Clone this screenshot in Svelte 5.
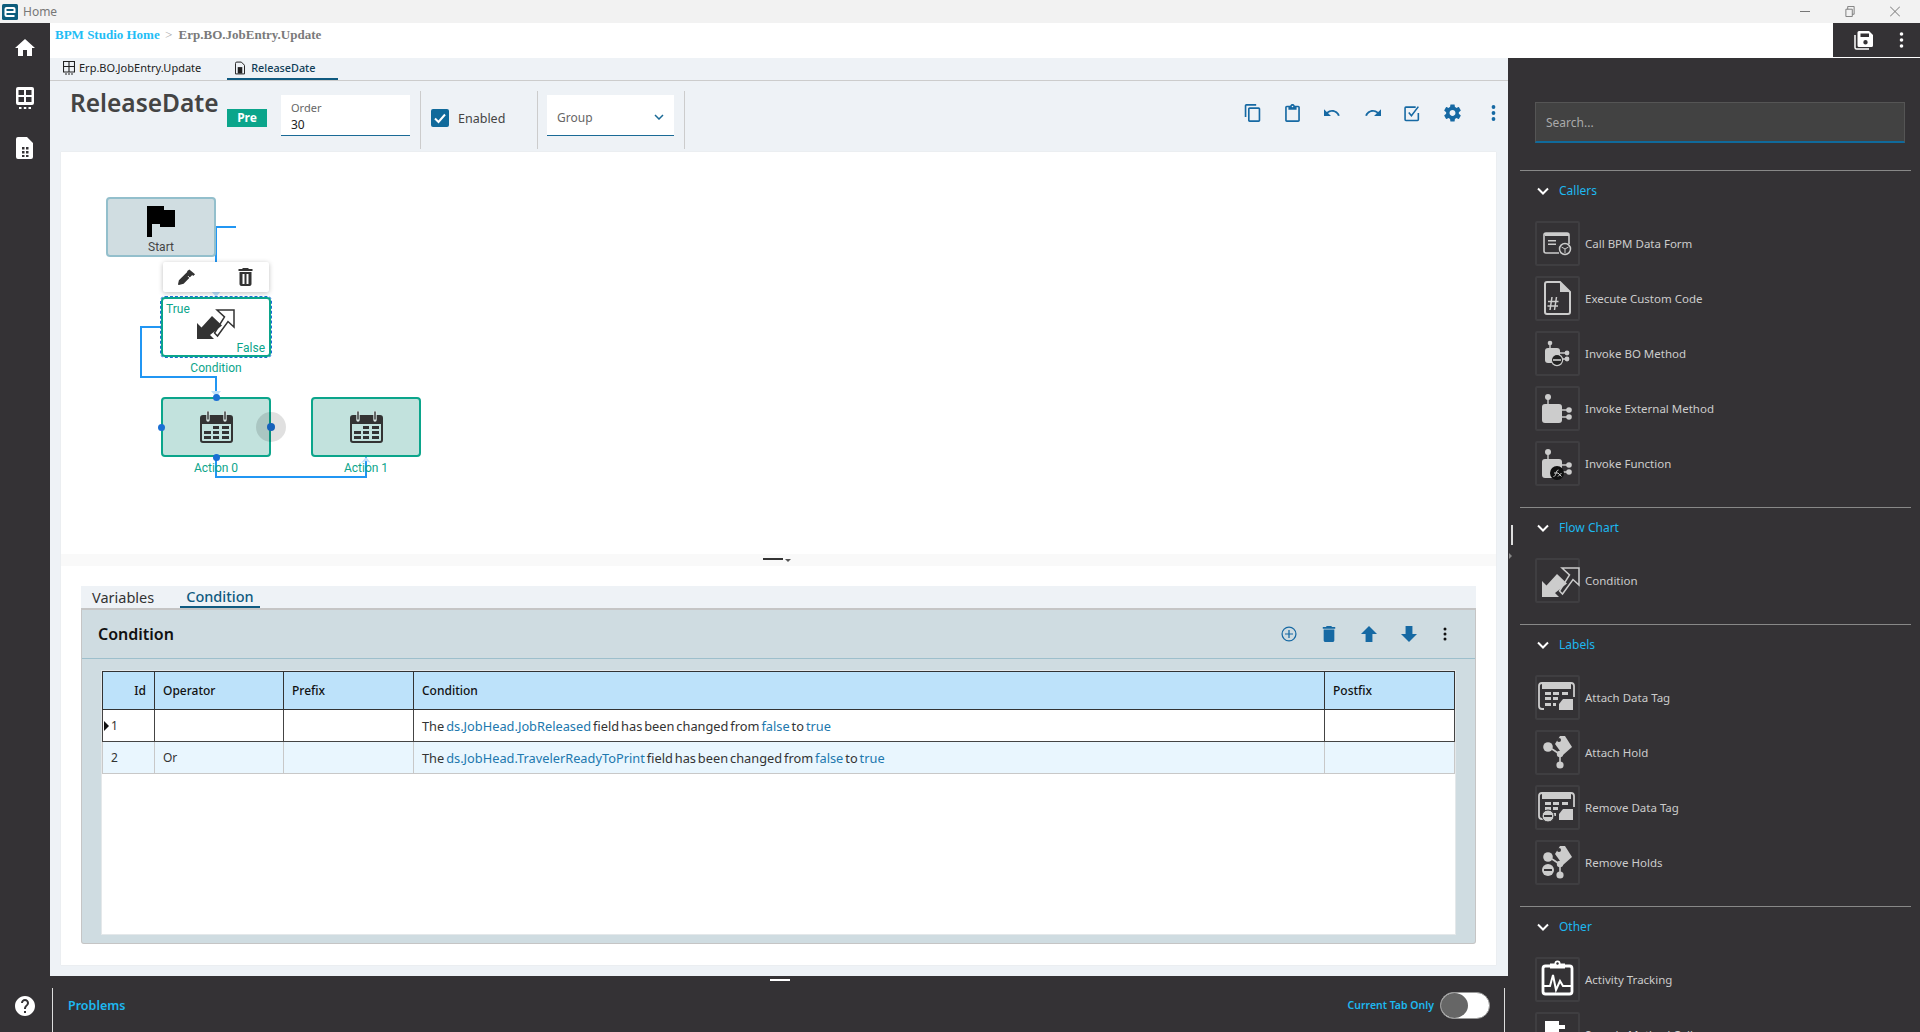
<script>
    const columns = [
        { label: "Id", width: 52, right: true },
        { label: "Operator", width: 129 },
        { label: "Prefix", width: 130 },
        { label: "Condition", width: 911 },
        { label: "Postfix", width: 130 },
    ];

    const rows = [
        { id: 1, op: "", field: "ds.JobHead.JobReleased" },
        { id: 2, op: "Or", field: "ds.JobHead.TravelerReadyToPrint" },
    ];

    const sections = [
        {
            title: "Callers",
            items: [
                { label: "Call BPM Data Form", icon: "form" },
                { label: "Execute Custom Code", icon: "code" },
                { label: "Invoke BO Method", icon: "bo" },
                { label: "Invoke External Method", icon: "ext" },
                { label: "Invoke Function", icon: "fn" },
            ],
        },
        { title: "Flow Chart", items: [{ label: "Condition", icon: "cond" }] },
        {
            title: "Labels",
            items: [
                { label: "Attach Data Tag", icon: "tag" },
                { label: "Attach Hold", icon: "hold" },
                { label: "Remove Data Tag", icon: "untag" },
                { label: "Remove Holds", icon: "unhold" },
            ],
        },
        {
            title: "Other",
            items: [
                { label: "Activity Tracking", icon: "track" },
                { label: "Sample Method Call", icon: "compat" },
            ],
        },
    ];
</script>

{#snippet condIcon(fill)}
    <path d="M0 14 4.500 18.500 15 7 25 16.500 13 26 17 30H0Z" fill={fill} stroke="none" />
    <path d="M20 1H37V18L31 12.500 20.500 27 17.500 24 27.500 8Z" fill="none" stroke={fill} stroke-width="1.500" stroke-linejoin="miter" />
{/snippet}

{#snippet calendar()}
    <svg class="cal" viewBox="0 0 33 32">
        <path d="M3 4H30a3 3 0 0 1 3 3V29a3 3 0 0 1-3 3H3a3 3 0 0 1-3-3V7a3 3 0 0 1 3-3ZM2 13V29a1 1 0 0 0 1 1H30a1 1 0 0 0 1-1V13Z" fill="#333" fill-rule="evenodd" />
        <path d="M8 1V9M25 1V9" stroke="#dbe9e6" stroke-width="3.400" stroke-linecap="round" />
        <path d="M8 1V8M25 1V8" stroke="#333" stroke-width="1.400" stroke-linecap="round" />
        <path d="M13 15h6v3h-6zM22 15h7v3h-7zM4 20h7v3H4zM13 20h6v3h-6zM22 20h7v3h-7zM4 25h7v3H4zM13 25h6v3h-6zM22 25h7v3h-7z" fill="#333" />
    </svg>
{/snippet}

{#snippet robot()}
    <rect x="7" y="18" width="20" height="19" rx="3" fill="#ccc" />
    <circle cx="13" cy="11" r="3" fill="#ccc" />
    <path d="M13 13V18M27 24H33M27 31H33" stroke="#ccc" stroke-width="1.400" />
    <circle cx="34" cy="24" r="2.800" fill="#ccc" />
    <circle cx="34" cy="31" r="2.800" fill="#ccc" />
{/snippet}

{#snippet dataTag()}
    <path d="M9 34H7a3 3 0 0 1-3-3V11a3 3 0 0 1 3-3H36a3 3 0 0 1 3 3V22" fill="none" stroke="#ccc" stroke-width="1.800" />
    <path d="M7 9H36V14H7Z" fill="#ccc" />
    <path d="M10 17h6v3h-6zM18 17h6v3h-6zM27 17h6v3h-6zM10 22h6v3h-6zM18 22h5v3h-5zM10 28h6v3h-6zM18 28h3v3h-3z" fill="#ccc" />
    <path d="M28 24H38V35H24V29Z" fill="#ccc" />
{/snippet}

{#snippet holdTag()}
    <circle cx="13" cy="17" r="4.800" fill="#ccc" />
    <circle cx="25" cy="24" r="3.200" fill="#ccc" />
    <circle cx="25" cy="35" r="3.600" fill="#ccc" />
    <path d="M17 19 23 23M25 27V32" stroke="#ccc" stroke-width="1.600" />
    <path d="M20 14 25 6H30L37 17 28 25Z" fill="#ccc" />
    <circle cx="24" cy="10" r="2" fill="#343235" />
{/snippet}

{#snippet paletteIcon(name)}
    <svg class="pal" viewBox="0 0 45 45">
        {#if name === "form"}
            <path d="M24 32H11a2 2 0 0 1-2-2V14a2 2 0 0 1 2-2H32a2 2 0 0 1 2 2V23" fill="none" stroke="#ccc" stroke-width="1.600" />
            <path d="M10 12H34V15H10ZM13 19H21V20.500H13ZM13 22.500H21V24H13Z" fill="#ccc" />
            <circle cx="30" cy="28" r="5.500" fill="#343235" stroke="#ccc" stroke-width="1.500" />
            <path d="M30 28V32M30 28 26.500 26M30 28 33.500 26" stroke="#ccc" stroke-width="1" />
        {:else if name === "code"}
            <path d="M12 6H25L35 16V36a2 2 0 0 1-2 2H12a2 2 0 0 1-2-2V8a2 2 0 0 1 2-2Z" fill="none" stroke="#ccc" stroke-width="2" />
            <path d="M25 6V16H35Z" fill="#ccc" />
            <path d="M17 21 15 34M21.500 21 19.500 34M13 25.500H23.500M12.500 30H23" stroke="#ccc" stroke-width="1.500" fill="none" />
        {:else if name === "bo"}
            <rect x="10" y="17" width="15" height="15" rx="3" fill="#ccc" />
            <circle cx="15" cy="12" r="2.300" fill="#ccc" />
            <path d="M15 14V17M25 22H31M25 28H31" stroke="#ccc" stroke-width="1.400" />
            <circle cx="32" cy="22" r="2.400" fill="#ccc" />
            <circle cx="32" cy="28" r="2.400" fill="#ccc" />
            <circle cx="22" cy="29" r="5.600" fill="#222" stroke="#ccc" stroke-width="1.200" />
            <path d="M18 29H26" stroke="#ccc" stroke-width="1.600" />
        {:else if name === "ext"}
            {@render robot()}
        {:else if name === "fn"}
            {@render robot()}
            <circle cx="22" cy="32" r="7" fill="#111" />
            <path d="M18.500 35.500C21.500 35.500 20.500 29 23.500 29M19 32H23M23 32 26.500 35.500M26.500 32 23 35.500" stroke="#ccc" stroke-width="1" fill="none" />
        {:else if name === "cond"}
            <g transform="translate(7 9)">{@render condIcon("#ccc")}</g>
        {:else if name === "tag"}
            {@render dataTag()}
        {:else if name === "hold"}
            {@render holdTag()}
        {:else if name === "untag"}
            {@render dataTag()}
            <circle cx="13" cy="31" r="6" fill="#ccc" stroke="#343235" stroke-width="1" />
            <path d="M9 31H17" stroke="#343235" stroke-width="2" />
        {:else if name === "unhold"}
            {@render holdTag()}
            <circle cx="13" cy="30" r="6" fill="#ccc" />
            <path d="M9 30H17" stroke="#343235" stroke-width="2" />
        {:else if name === "track"}
            <rect x="8" y="9" width="29" height="28" rx="2.500" fill="none" stroke="#fff" stroke-width="2.800" />
            <path d="M15 6.500H30V11.500H15Z" fill="#fff" />
            <circle cx="22.500" cy="6.500" r="3" fill="#fff" />
            <circle cx="22.500" cy="6.500" r="1.200" fill="#343235" />
            <path d="M9 29H15L18 18 21 33 25 24 28 29H36" fill="none" stroke="#fff" stroke-width="2" />
        {:else}
            <path d="M10 9H24V13H30V17L24 17V38H10Z" fill="#fff" />
        {/if}
    </svg>
{/snippet}

<div class="app">
    <header class="titlebar">
        <svg class="logo" viewBox="0 0 16 16">
            <rect width="16" height="16" rx="1.500" fill="#0c5c7c" />
            <path d="M3.500 8H12.500V5a1 1 0 0 0-1-1H4.500a1 1 0 0 0-1 1V11a1 1 0 0 0 1 1H12.500" fill="none" stroke="#fff" stroke-width="2" />
        </svg>
        <span class="home">Home</span>
        <div class="winctl">
            <svg viewBox="0 0 10 10"><path d="M0 5H10" /></svg>
            <svg viewBox="0 0 10 12"><path d="M.5 3.500H7.500V11.500H.5ZM2.500 3.500V.5H9.500V9H7.500" /></svg>
            <svg viewBox="0 0 10 10"><path d="M0 0 10 10M10 0 0 10" /></svg>
        </div>
    </header>

    <div class="body">
        <nav class="rail">
            <div class="rail-top">
                <svg class="rail-icon" viewBox="0 0 24 24"><path d="M10 20v-6h4v6h5v-8h3L12 3 2 12h3v8z" /></svg>
                <svg class="rail-icon" viewBox="0 0 20 24">
                    <path d="M3 1H17a2 2 0 0 1 2 2V17a2 2 0 0 1-2 2H3a2 2 0 0 1-2-2V3a2 2 0 0 1 2-2ZM3.500 4V9H9V4ZM11 4V9H16.500V4ZM3.500 11V16H9V11ZM11 11V16H16.500V11Z" fill-rule="evenodd" />
                    <path d="M4 21h2.500v2H4zM8.800 21h2.500v2H8.800zM13.500 21h2.500v2H13.500z" />
                </svg>
                <svg class="rail-icon" viewBox="0 0 20 24">
                    <path d="M3 1H12L18 7V21a2 2 0 0 1-2 2H3a2 2 0 0 1-2-2V3a2 2 0 0 1 2-2ZM7 11V13.500H9.500V11ZM11 11V13.500H13.500V11ZM7 15V17.500H9.500V15ZM11 15V17.500H13.500V15ZM7 19V21H9.500V19ZM11 19V21H13.500V19Z" fill-rule="evenodd" />
                </svg>
            </div>
            <svg class="help" viewBox="2 2 20 20">
                <path d="M12 2C6.480 2 2 6.480 2 12s4.480 10 10 10 10-4.480 10-10S17.520 2 12 2zm1 17h-2v-2h2v2zm2.070-7.750l-.9.920C13.450 12.900 13 13.500 13 15h-2v-.5c0-1.100.45-2.100 1.170-2.830l1.240-1.260c.37-.36.59-.86.59-1.410 0-1.100-.9-2-2-2s-2 .9-2 2H8c0-2.210 1.790-4 4-4s4 1.790 4 4c0 .88-.36 1.680-.93 2.250z" />
            </svg>
        </nav>

        <div class="work">
            <div class="crumbs">
                <div class="crumb-text">
                    <span class="crumb-link">BPM Studio Home</span>
                    <span class="crumb-sep">&gt;</span>
                    <span class="crumb-cur">Erp.BO.JobEntry.Update</span>
                </div>
                <div class="save-box">
                    <svg class="save" viewBox="0 0 20 20">
                        <path d="M1 5V17.500A1.500 1.500 0 0 0 2.500 19H15" fill="none" stroke="#fff" stroke-width="1.500" />
                        <path d="M5 1H15L19 5V15.500A1.500 1.500 0 0 1 17.500 17H5A1.500 1.500 0 0 1 3.500 15.500V2.500A1.500 1.500 0 0 1 5 1ZM6.500 3.500V7H15V3.500ZM11.500 10A2.200 2.200 0 1 0 11.500 14.400 2.200 2.200 0 0 0 11.500 10Z" fill="#fff" fill-rule="evenodd" />
                    </svg>
                    <svg class="dots" viewBox="0 0 4 16"><circle cx="2" cy="2" r="1.800" /><circle cx="2" cy="8" r="1.800" /><circle cx="2" cy="14" r="1.800" /></svg>
                </div>
            </div>

            <div class="lower">
                <main class="center">
                    <div class="tabs">
                        <div class="tab">
                            <svg class="tab-icon" viewBox="0 0 12 14">
                                <path d="M.5.5H11.500V11H.5ZM6 .5V11M.5 5.500H11.500" fill="none" stroke="#222" stroke-width="1.100" />
                                <path d="M2 12.500h2v1H2zM5 12.500h2v1H5zM8 12.500h2v1H8z" fill="#222" />
                            </svg>
                            Erp.BO.JobEntry.Update
                        </div>
                        <div class="tab active">
                            <svg class="tab-icon" viewBox="0 0 11 14">
                                <path d="M.5 2A1.500 1.500 0 0 1 2 .5H7L10.500 4V13.500H.5Z" fill="none" stroke="#222" stroke-width="1.100" />
                                <path d="M3 6H8V13H3Z" fill="#222" />
                            </svg>
                            ReleaseDate
                        </div>
                    </div>

                    <div class="head">
                        <h1>ReleaseDate</h1>
                        <span class="badge">Pre</span>
                        <div class="field order">
                            <span class="field-label">Order</span>
                            <span class="field-value">30</span>
                        </div>
                        <div class="sep"></div>
                        <label class="enabled">
                            <span class="check">
                                <svg viewBox="0 0 18 18"><path d="M4 9.500 7.500 13 14 5.500" fill="none" stroke="#fff" stroke-width="2" /></svg>
                            </span>
                            Enabled
                        </label>
                        <div class="sep"></div>
                        <div class="field group">
                            <span>Group</span>
                            <svg class="chev" viewBox="0 0 10 6"><path d="M1 1 5 5 9 1" fill="none" stroke="#1a6a96" stroke-width="1.500" /></svg>
                        </div>
                        <div class="sep"></div>
                        <div class="tools">
                            <svg viewBox="2 1 19 22"><path d="M16 1H4c-1.100 0-2 .9-2 2v14h2V3h12V1zm3 4H8c-1.100 0-2 .9-2 2v14c0 1.100.9 2 2 2h11c1.100 0 2-.9 2-2V7c0-1.100-.9-2-2-2zm0 16H8V7h11v14z" /></svg>
                            <svg viewBox="3 0 18 22"><path d="M19 2h-4.180C14.400.84 13.300 0 12 0c-1.300 0-2.400.84-2.820 2H5c-1.100 0-2 .9-2 2v16c0 1.100.9 2 2 2h14c1.100 0 2-.9 2-2V4c0-1.100-.9-2-2-2zm-7 0c.55 0 1 .45 1 1s-.45 1-1 1-1-.45-1-1 .45-1 1-1zm7 18H5V4h2v3h10V4h2v16z" /></svg>
                            <svg viewBox="2 5 22 14"><path d="M12.500 8c-2.650 0-5.050.99-6.900 2.600L2 7v9h9l-3.620-3.620c1.390-1.160 3.160-1.880 5.120-1.880 3.540 0 6.550 2.310 7.600 5.500l2.370-.78C21.080 11.030 17.150 8 12.500 8z" /></svg>
                            <svg viewBox="0 5 22 14"><path d="M18.400 10.600C16.550 8.990 14.150 8 11.500 8c-4.650 0-8.580 3.030-9.960 7.220L3.900 16c1.050-3.190 4.050-5.500 7.600-5.500 1.950 0 3.730.72 5.120 1.880L13 16h9V7l-3.600 3.600z" /></svg>
                            <svg viewBox="0 0 16 16"><path d="M13.500 8V14.200a.8.800 0 0 1-.8.800H1.800a.8.800 0 0 1-.8-.8V3.300a.8.800 0 0 1 .8-.8H11M4.500 7.500 7 10.500 13.500 2" fill="none" stroke="#1669a3" stroke-width="1.500" /></svg>
                            <svg viewBox="2 2 20 20"><path d="M19.430 12.980c.04-.32.07-.64.07-.98s-.03-.66-.07-.98l2.110-1.650c.19-.15.24-.42.12-.64l-2-3.460c-.12-.22-.39-.3-.61-.22l-2.490 1c-.52-.4-1.080-.73-1.690-.98l-.38-2.650C14.460 2.180 14.250 2 14 2h-4c-.25 0-.46.18-.49.42l-.38 2.650c-.61.25-1.170.59-1.690.98l-2.490-1c-.23-.09-.49 0-.61.22l-2 3.460c-.13.22-.07.49.12.64l2.110 1.650c-.04.32-.07.65-.07.98s.03.66.07.98l-2.110 1.650c-.19.15-.24.42-.12.64l2 3.460c.12.22.39.3.61.22l2.490-1c.52.4 1.080.73 1.690.98l.38 2.650c.03.24.24.42.49.42h4c.25 0 .46-.18.49-.42l.38-2.650c.61-.25 1.170-.59 1.690-.98l2.490 1c.23.09.49 0 .61-.22l2-3.460c.12-.22.07-.49-.12-.64l-2.110-1.650zM12 15.500c-1.930 0-3.500-1.570-3.500-3.500s1.570-3.500 3.500-3.500 3.500 1.570 3.500 3.500-1.570 3.500-3.500 3.500z" /></svg>
                            <svg class="tool-dots" viewBox="0 0 4 16"><circle cx="2" cy="2" r="1.900" /><circle cx="2" cy="8" r="1.900" /><circle cx="2" cy="14" r="1.900" /></svg>
                        </div>
                    </div>

                    <section class="card">
                        <div class="canvas">
                            <svg class="wires" width="500" height="402">
                                <path d="M216 75H236M216 75V110M161 175H141V225H216V245M216 305V325H366V305" fill="none" stroke="#2196f3" stroke-width="2" />
                                <path d="M211 239H221L216 245ZM211 139H221L216 145ZM361 311 366 305 371 311 366 309Z" fill="#bfe0fb" />
                            </svg>

                            <div class="node start">
                                <svg class="flag" viewBox="0 0 28 31"><path d="M0 0H17V4H28V21H13V18H5V31H0Z" /></svg>
                                <span>Start</span>
                            </div>

                            <div class="popup">
                                <svg viewBox="0 0 20 18">
                                    <path d="M13 1 19 6 17 8 16 7 7 16 2 17.500 1 17 2 12.500 11 3.500 10.500 3Z" fill="#333" />
                                    <path d="M11.500 8 14 10.500" stroke="#fff" stroke-width="1" />
                                </svg>
                                <svg viewBox="5 3 14 18"><path d="M6 19c0 1.100.9 2 2 2h8c1.100 0 2-.9 2-2V7H6v12zM19 4h-3.500l-1-1h-5l-1 1H5v2h14V4z M9 9V19H11V9ZM13 9V19H15V9Z" fill="#333" fill-rule="evenodd" /></svg>
                            </div>

                            <div class="node cond">
                                <span class="true">True</span>
                                <svg class="cond-icon" viewBox="0 0 38 30">{@render condIcon("#333")}</svg>
                                <span class="false">False</span>
                            </div>
                            <span class="node-label cond-label">Condition</span>

                            <div class="node action a0">{@render calendar()}</div>
                            <span class="node-label a0-label">Action 0</span>
                            <div class="node action a1">{@render calendar()}</div>
                            <span class="node-label a1-label">Action 1</span>

                            <i class="port p-top"></i>
                            <i class="port p-left"></i>
                            <i class="port p-bottom"></i>
                            <i class="port p-right"></i>
                        </div>

                        <div class="splitter">
                            <i class="grip"></i><i class="grip-arrow"></i>
                        </div>

                        <div class="detail">
                            <div class="detail-tabs">
                                <div class="dtab">Variables</div>
                                <div class="dtab active">Condition</div>
                            </div>
                            <div class="panel">
                                <div class="panel-head">
                                    <h2>Condition</h2>
                                    <div class="panel-tools">
                                        <svg viewBox="0 0 18 18"><circle cx="9" cy="9" r="7.800" fill="none" stroke="#1669a3" stroke-width="1.400" /><path d="M9 4.500V13.500M4.500 9H13.500" stroke="#1669a3" stroke-width="1.400" /></svg>
                                        <svg viewBox="5 3 14 18"><path d="M6 19c0 1.100.9 2 2 2h8c1.100 0 2-.9 2-2V7H6v12zM19 4h-3.500l-1-1h-5l-1 1H5v2h14V4z" /></svg>
                                        <svg viewBox="0 0 14 14"><path d="M7 0 14 7H10V14H4V7H0Z" /></svg>
                                        <svg viewBox="0 0 14 14"><path d="M4 0H10V7H14L7 14 0 7H4Z" /></svg>
                                        <svg class="pdots" viewBox="0 0 4 14"><circle cx="2" cy="2" r="1.500" /><circle cx="2" cy="7" r="1.500" /><circle cx="2" cy="12" r="1.500" /></svg>
                                    </div>
                                </div>
                                <div class="grid">
                                    <table>
                                        <colgroup>
                                            {#each columns as col}<col style="width: {col.width}px" />{/each}
                                        </colgroup>
                                        <thead>
                                            <tr>
                                                {#each columns as col}
                                                    <th class:right={col.right}>{col.label}</th>
                                                {/each}
                                            </tr>
                                        </thead>
                                        <tbody>
                                            {#each rows as row, i}
                                                <tr class:selected={i === 0} class:alt={i === 1}>
                                                    <td class="id">{#if i === 0}<i class="marker"></i>{/if}{row.id}</td>
                                                    <td>{row.op}</td>
                                                    <td></td>
                                                    <td class="expr">The <span class="lnk">{row.field}</span> field has been changed from <span class="lnk">false</span> to <span class="lnk">true</span></td>
                                                    <td></td>
                                                </tr>
                                            {/each}
                                        </tbody>
                                    </table>
                                </div>
                            </div>
                        </div>
                    </section>

                    <footer class="foot">
                        <i class="foot-line left"></i>
                        <i class="foot-grip"></i>
                        <span class="problems">Problems</span>
                        <div class="foot-right">
                            <span class="current">Current Tab Only</span>
                            <div class="toggle"><i></i></div>
                        </div>
                        <i class="foot-line right"></i>
                    </footer>
                </main>

                <aside class="palette">
                    <i class="pal-bar"></i>
                    <i class="pal-arrow"></i>
                    <div class="search"><span>Search...</span></div>
                    {#each sections as section}
                        <section class="pal-section">
                            <div class="pal-title">
                                <svg viewBox="0 0 12 8"><path d="M1 1.500 6 6.500 11 1.500" fill="none" stroke="#fff" stroke-width="2" /></svg>
                                <span>{section.title}</span>
                            </div>
                            <div class="pal-items">
                                {#each section.items as item}
                                    <div class="pal-item">
                                        <div class="pal-box">{@render paletteIcon(item.icon)}</div>
                                        <span>{item.label}</span>
                                    </div>
                                {/each}
                            </div>
                        </section>
                    {/each}
                </aside>
            </div>
        </div>
    </div>
</div>

<style>
    :global(body) {
        margin: 0;
        background: #fff;
    }

    .app {
        width: 1920px;
        height: 1032px;
        overflow: hidden;
        display: flex;
        flex-direction: column;
        font-family: "Noto Sans", sans-serif;
        font-size: 12px;
        color: #333;
    }

    .titlebar {
        height: 23px;
        flex: none;
        background: #f2f2f2;
        display: flex;
        align-items: center;
        padding-left: 2px;
    }

    .logo {
        width: 16px;
        height: 16px;
    }

    .home {
        margin-left: 5px;
        color: #777;
        font-size: 12px;
    }

    .winctl {
        margin-left: auto;
        display: flex;
        gap: 35px;
        padding-right: 20px;
        align-items: center;
    }

    .winctl svg {
        width: 10px;
        height: 11px;
        fill: none;
        stroke: #777;
        stroke-width: 1;
    }

    .body {
        flex: 1;
        display: flex;
        min-height: 0;
    }

    .rail {
        width: 50px;
        flex: none;
        background: #343235;
        display: flex;
        flex-direction: column;
        justify-content: space-between;
        align-items: center;
        padding: 13px 0 16px;
        box-sizing: border-box;
    }

    .rail-top {
        display: flex;
        flex-direction: column;
        align-items: center;
        gap: 26px;
    }

    .rail-icon {
        width: 24px;
        height: 24px;
        fill: #fff;
    }

    .help {
        width: 20px;
        height: 20px;
        fill: #fff;
    }

    .work {
        flex: 1;
        min-width: 0;
        display: flex;
        flex-direction: column;
    }

    .crumbs {
        height: 35px;
        flex: none;
        display: flex;
        justify-content: space-between;
        background: #fff;
    }

    .crumb-text {
        padding: 4px 0 0 5px;
        font-family: "Liberation Serif", serif;
        font-weight: bold;
        font-size: 13px;
    }

    .crumb-link {
        color: #1fbdf5;
    }

    .crumb-sep {
        color: #aaa;
        font-weight: normal;
        margin: 0 3px 0 2px;
    }

    .crumb-cur {
        color: #7a7a7a;
    }

    .save-box {
        width: 87px;
        height: 34px;
        background: #343235;
        display: flex;
        align-items: center;
        gap: 25px;
        padding-left: 21px;
        box-sizing: border-box;
    }

    .save {
        width: 20px;
        height: 20px;
    }

    .dots {
        width: 5px;
        height: 16px;
        fill: #fff;
    }

    .lower {
        flex: 1;
        display: flex;
        min-height: 0;
    }

    .center {
        flex: 1;
        min-width: 0;
        background: #eef2f6;
        display: flex;
        flex-direction: column;
    }

    .tabs {
        height: 23px;
        flex: none;
        box-sizing: border-box;
        border-bottom: 1px solid #ccc;
        display: flex;
        padding-left: 13px;
        font-size: 11px;
        color: #222;
    }

    .tab {
        display: flex;
        align-items: center;
        gap: 4px;
        height: 22px;
        box-sizing: border-box;
        padding-bottom: 3px;
    }

    .tab.active {
        margin-left: 26px;
        width: 111px;
        padding: 0 0 1px 8px;
        border-bottom: 2px solid #0f5a80;
        color: #0f3d56;
        gap: 6px;
        font-size: 10.800px;
        font-weight: 500;
    }

    .tab-icon {
        width: 12px;
        height: 14px;
    }

    .tab.active .tab-icon {
        width: 10px;
    }

    .head {
        height: 71px;
        flex: none;
        display: flex;
        align-items: flex-start;
        padding-left: 20px;
        padding-right: 12px;
        position: relative;
    }

    h1 {
        margin: 4px 0 0;
        width: 148px;
        flex: none;
        font-size: 24.500px;
        font-weight: 600;
        line-height: 36px;
        color: #444;
        white-space: nowrap;
    }

    .badge {
        margin: 28px 0 0 9px;
        width: 40px;
        height: 18px;
        background: #0ba58b;
        color: #fff;
        font-weight: bold;
        font-size: 12px;
        line-height: 18px;
        text-align: center;
    }

    .field {
        margin-top: 14px;
        height: 41px;
        background: #fff;
        border-bottom: 1px solid #1a6a96;
        box-sizing: border-box;
    }

    .order {
        margin-left: 14px;
        width: 129px;
        padding: 5px 10px;
        display: flex;
        flex-direction: column;
    }

    .field-label {
        font-size: 11px;
        line-height: 16px;
        color: #666;
    }

    .field-value {
        font-size: 12px;
        line-height: 17px;
        color: #222;
    }

    .sep {
        width: 1px;
        height: 58px;
        margin-top: 10px;
        background: #ccc;
    }

    .order + .sep {
        margin-left: 10px;
    }

    .enabled {
        display: flex;
        align-items: center;
        gap: 9px;
        width: 74px;
        white-space: nowrap;
        margin: 26px 32px 0 10px;
        color: #444;
        font-size: 12.500px;
        height: 22px;
    }

    .check {
        width: 18px;
        height: 18px;
        flex: none;
        border-radius: 2px;
        background: #106a9b;
        display: block;
    }

    .check svg {
        display: block;
    }

    .group {
        width: 127px;
        margin-left: 9px;
        margin-right: 10px;
        display: flex;
        justify-content: space-between;
        align-items: center;
        padding: 4px 10px 0;
        color: #666;
    }

    .chev {
        width: 10px;
        height: 6px;
    }

    .tools {
        margin-left: auto;
        margin-top: 22px;
        display: flex;
        align-items: center;
        gap: 23px;
        height: 20px;
        fill: #1669a3;
    }

    .tools svg {
        width: 17px;
        height: 18px;
    }

    .tools svg.tool-dots {
        width: 5px;
        height: 16px;
        margin-left: 7px;
    }

    .card {
        flex: 1;
        min-height: 0;
        margin: 0 12px 11px 11px;
        background: #fff;
        display: flex;
        flex-direction: column;
        box-shadow: 0 0 1px #ddd;
    }

    .canvas {
        height: 402px;
        flex: none;
        position: relative;
    }

    .wires {
        position: absolute;
        left: -61px;
        top: 0;
    }

    .node {
        position: absolute;
        box-sizing: border-box;
        width: 110px;
        height: 60px;
        border-radius: 4px;
        border: 2px solid #0ba58b;
    }

    .start {
        left: 45px;
        top: 45px;
        background: #d0dde1;
        border-color: #93bfcc;
        display: flex;
        flex-direction: column;
        align-items: center;
        font-family: Roboto, sans-serif;
        font-size: 12px;
        color: #444;
    }

    .flag {
        width: 28px;
        height: 31px;
        margin-top: 7px;
        flex: none;
    }

    .start span {
        line-height: 14px;
        margin-top: 3px;
    }

    .popup {
        position: absolute;
        left: 102px;
        top: 110px;
        width: 106px;
        height: 30px;
        background: #fff;
        border-radius: 2px;
        box-shadow: 0 1px 5px rgba(0, 0, 0, 0.25);
        display: flex;
        align-items: center;
        gap: 40px;
        padding-left: 14px;
        box-sizing: border-box;
    }

    .popup svg {
        width: 19px;
        height: 18px;
    }

    .cond {
        left: 100px;
        top: 145px;
        background: #fff;
        outline: 1px dashed #1a6fd4;
        font-family: Roboto, sans-serif;
        font-size: 12px;
        color: #0ba58b;
    }

    .cond-icon {
        position: absolute;
        left: 34px;
        top: 10px;
        width: 38px;
        height: 30px;
    }

    .true {
        position: absolute;
        left: 3px;
        top: 3px;
    }

    .false {
        position: absolute;
        right: 4px;
        bottom: 0;
    }

    .node-label {
        position: absolute;
        width: 110px;
        text-align: center;
        font-family: Roboto, sans-serif;
        font-size: 12px;
        line-height: 14px;
        color: #0ba58b;
    }

    .cond-label {
        left: 100px;
        top: 209px;
    }

    .action {
        top: 245px;
        background: #c2e2dd;
        display: flex;
        align-items: center;
        justify-content: center;
    }

    .a0 {
        left: 100px;
    }

    .a1 {
        left: 250px;
    }

    .a0-label {
        left: 100px;
        top: 309px;
    }

    .a1-label {
        left: 250px;
        top: 309px;
    }

    .cal {
        width: 33px;
        height: 32px;
    }

    .port {
        position: absolute;
        width: 7px;
        height: 7px;
        border-radius: 50%;
        background: #1a6fd4;
    }

    .p-top {
        left: 151.500px;
        top: 241.500px;
    }

    .p-left {
        left: 96.500px;
        top: 271.500px;
    }

    .p-bottom {
        left: 151.500px;
        top: 301.500px;
    }

    .p-right {
        left: 206px;
        top: 271px;
        width: 8px;
        height: 8px;
    }

    .p-right::before {
        content: "";
        position: absolute;
        left: -11px;
        top: -11px;
        width: 30px;
        height: 30px;
        border-radius: 50%;
        background: rgba(0, 0, 0, 0.12);
    }

    .splitter {
        height: 12px;
        flex: none;
        background: #f9f9f9;
        position: relative;
    }

    .grip {
        position: absolute;
        left: 702px;
        top: 4px;
        width: 20px;
        height: 2px;
        background: #333;
    }

    .grip-arrow {
        position: absolute;
        left: 724px;
        top: 5px;
        border: 3px solid transparent;
        border-top-color: #555;
        border-bottom: 0;
    }

    .detail {
        flex: 1;
        min-height: 0;
        margin: 20px 20px 21px;
        display: flex;
        flex-direction: column;
    }

    .detail-tabs {
        height: 22px;
        flex: none;
        background: #eef2f6;
        display: flex;
        font-size: 14.500px;
        line-height: 22px;
        color: #333;
    }

    .dtab {
        padding: 0 6px;
        margin-left: 5px;
        height: 22px;
        box-sizing: border-box;
    }

    .dtab.active {
        margin-left: 20px;
        border-bottom: 2px solid #0f5a80;
        color: #0f5a80;
        font-weight: 500;
        line-height: 20px;
    }

    .panel {
        flex: 1;
        min-height: 0;
        background: #cfdce1;
        border: 1px solid #c5c5c5;
        border-top-width: 2px;
        border-radius: 0 0 3px 3px;
        display: flex;
        flex-direction: column;
    }

    .panel-head {
        height: 48px;
        flex: none;
        border-bottom: 1px solid #9dbfcc;
        display: flex;
        align-items: center;
        justify-content: space-between;
        padding: 0 28px 0 16px;
    }

    h2 {
        margin: 0;
        font-size: 16px;
        font-weight: 600;
        color: #111;
    }

    .panel-tools {
        display: flex;
        align-items: center;
        gap: 24px;
        fill: #1669a3;
    }

    .panel-tools svg {
        width: 16px;
        height: 16px;
    }

    .panel-tools svg.pdots {
        width: 4px;
        height: 14px;
        fill: #111;
        margin-left: 2px;
    }

    .grid {
        flex: 1;
        min-height: 0;
        margin: 12px 20px 9px;
        background: #fff;
        box-shadow: 0 0 0 1px #e4e8ea;
    }

    table {
        width: 1352px;
        table-layout: fixed;
        border-collapse: collapse;
        font-size: 12px;
    }

    th {
        height: 37px;
        padding: 0 8px;
        background: #bde2fa;
        border: 1px solid #333;
        font-weight: 500;
        text-align: left;
        color: #111;
    }

    th.right {
        text-align: right;
    }

    td {
        height: 32px;
        padding: 0 8px;
        box-sizing: border-box;
        color: #333;
    }

    td.expr {
        font-size: 12.800px;
        word-spacing: -1.400px;
        white-space: nowrap;
    }

    .selected td {
        background: #fff;
        border: 1px solid #444;
    }

    .alt td {
        background: #e9f6fe;
        border: 1px solid #c8c8c8;
    }

    td.id {
        position: relative;
    }

    .marker {
        position: absolute;
        left: 1px;
        top: 11px;
        border: 5px solid transparent;
        border-left: 5px solid #111;
        border-right: 0;
    }

    .lnk {
        color: #2178ae;
    }

    .foot {
        height: 54px;
        flex: none;
        background: #343235;
        display: flex;
        align-items: center;
        justify-content: space-between;
        position: relative;
        padding: 2px 18px 0;
    }

    .foot-line {
        position: absolute;
        top: 12px;
        bottom: 0;
        width: 1px;
        background: #ddd;
    }

    .foot-line.left {
        left: 2px;
    }

    .foot-line.right {
        right: 3px;
    }

    .foot-grip {
        position: absolute;
        left: 720px;
        top: 3px;
        width: 20px;
        height: 2px;
        background: #fff;
    }

    .problems {
        color: #1db8f0;
        font-size: 12.500px;
        font-weight: 600;
    }

    .foot-right {
        display: flex;
        align-items: center;
        gap: 6px;
    }

    .current {
        color: #1db8f0;
        font-size: 10.500px;
        font-weight: 600;
    }

    .toggle {
        width: 50px;
        height: 27px;
        border-radius: 14px;
        background: #fff;
        border: 1px solid #999;
        box-sizing: border-box;
        position: relative;
    }

    .toggle i {
        position: absolute;
        left: 0;
        top: 0;
        width: 27px;
        height: 25px;
        border-radius: 50%;
        background: #666;
    }

    .palette {
        width: 412px;
        flex: none;
        background: #343235;
        overflow: hidden;
        position: relative;
    }

    .pal-bar {
        position: absolute;
        left: 3px;
        top: 467px;
        width: 2px;
        height: 20px;
        background: #ddd;
    }

    .pal-arrow {
        position: absolute;
        left: 1px;
        top: 495px;
        border: 3px solid transparent;
        border-left-color: #888;
        border-right: 0;
    }

    .search {
        margin: 44px 15px 27px 27px;
        height: 41px;
        box-sizing: border-box;
        background: #424242;
        border: 1px solid #555;
        border-bottom: 2px solid #106a9b;
        padding-left: 10px;
        display: flex;
        align-items: center;
        color: #aaa;
        font-size: 12px;
    }

    .pal-section {
        margin: 0 9px 0 12px;
        border-top: 1px solid #888;
        padding: 0 0 21px 15px;
    }

    .pal-title {
        height: 39px;
        margin-top: 0;
        display: flex;
        align-items: center;
        color: #1db8f0;
        gap: 10px;
        font-size: 12px;
        padding-left: 2px;
    }

    .pal-title svg {
        width: 12px;
        height: 8px;
    }

    .pal-items {
        display: flex;
        flex-direction: column;
        gap: 10px;
        margin-top: 11px;
    }

    .pal-item {
        display: flex;
        align-items: center;
        gap: 5px;
        color: #ccc;
        font-size: 11.500px;
    }

    .pal-box {
        width: 45px;
        height: 45px;
        box-sizing: border-box;
        border: 2px solid #3f3e41;
        border-radius: 2px;
    }

    .pal {
        width: 45px;
        height: 45px;
        margin: -2px;
        display: block;
    }
</style>
